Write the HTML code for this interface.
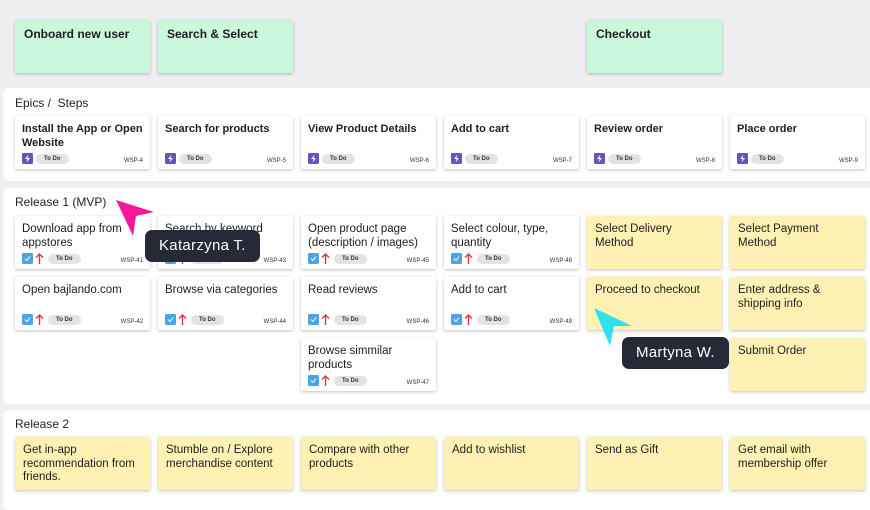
<!DOCTYPE html>
<html><head><meta charset="utf-8"><style>
*{box-sizing:border-box;margin:0;padding:0}
body{width:870px;height:494px;overflow:hidden;background:#efeff1;font-family:"Liberation Sans",sans-serif;position:relative;color:#1e1e1e}
.p{position:absolute;left:3px;width:880px;background:#fff;border-radius:6px}
.lbl{position:absolute;left:15px;font-size:12px;color:#222}
.c{position:absolute;width:135px;height:53px;background:#fff;border-radius:2px;box-shadow:0 1px 3px rgba(0,0,0,.25);padding:7px 7px;font-size:11.5px;line-height:13.5px}
.g{background:#c9f8dd;font-weight:bold;padding:8px 9px;font-size:12px}
.y{background:#fdf1b3;padding:7px 14px 7px 8px}
.e{font-weight:bold;font-size:11px}
.f{position:absolute;left:7px;right:7px;bottom:5px;height:11px;font-size:6px;font-weight:bold}
.ic{position:absolute;left:0;top:0;width:11px;height:11px;border-radius:1.5px;background:#6554c0}
.ic.b{background:#4ba3e8}
.ar{position:absolute;left:13px;top:0}
.td{position:absolute;top:1px;height:10px;line-height:10px;padding:0 8px;background:#e3e3e5;border-radius:5px;color:#333}
.ws{position:absolute;right:0;top:2px;color:#333;font-weight:normal}
.tag{position:absolute;background:#252a36;color:#fff;border-radius:7px;font-size:15px;padding:0 14px;line-height:32px;letter-spacing:.3px}
</style></head><body>
<div class="c g" style="left:15px;top:20px">Onboard new user</div>
<div class="c g" style="left:158px;top:20px">Search &amp; Select</div>
<div class="c g" style="left:587px;top:20px">Checkout</div>

<div class="p" style="top:88px;height:93px"></div>
<div class="p" style="top:188px;height:216px"></div>
<div class="p" style="top:410px;height:100px"></div>

<div class="lbl" style="top:96px">Epics /&nbsp; Steps</div>
<div class="lbl" style="top:195px">Release 1 (MVP)</div>
<div class="lbl" style="top:417px">Release 2</div>

<div class="c e" style="left:15px;top:116px">Install the App or Open Website<div class="f"><span class="ic"><svg width="11" height="11"><path d="M6.5 1.5L3 6h2.5L4.5 9.5 8 5H5.5z" fill="#fff"/></svg></span><span class="td" style="left:14px">To Do</span><span class="ws">WSP-4</span></div></div>
<div class="c e" style="left:158px;top:116px">Search for products<div class="f"><span class="ic"><svg width="11" height="11"><path d="M6.5 1.5L3 6h2.5L4.5 9.5 8 5H5.5z" fill="#fff"/></svg></span><span class="td" style="left:14px">To Do</span><span class="ws">WSP-5</span></div></div>
<div class="c e" style="left:301px;top:116px">View Product Details<div class="f"><span class="ic"><svg width="11" height="11"><path d="M6.5 1.5L3 6h2.5L4.5 9.5 8 5H5.5z" fill="#fff"/></svg></span><span class="td" style="left:14px">To Do</span><span class="ws">WSP-6</span></div></div>
<div class="c e" style="left:444px;top:116px">Add to cart<div class="f"><span class="ic"><svg width="11" height="11"><path d="M6.5 1.5L3 6h2.5L4.5 9.5 8 5H5.5z" fill="#fff"/></svg></span><span class="td" style="left:14px">To Do</span><span class="ws">WSP-7</span></div></div>
<div class="c e" style="left:587px;top:116px">Review order<div class="f"><span class="ic"><svg width="11" height="11"><path d="M6.5 1.5L3 6h2.5L4.5 9.5 8 5H5.5z" fill="#fff"/></svg></span><span class="td" style="left:14px">To Do</span><span class="ws">WSP-8</span></div></div>
<div class="c e" style="left:730px;top:116px">Place order<div class="f"><span class="ic"><svg width="11" height="11"><path d="M6.5 1.5L3 6h2.5L4.5 9.5 8 5H5.5z" fill="#fff"/></svg></span><span class="td" style="left:14px">To Do</span><span class="ws">WSP-9</span></div></div>

<div class="c" style="left:15px;top:216px">Download app from appstores<div class="f"><span class="ic b"><svg width="11" height="11"><path d="M3 5.5l2 2 3-4" stroke="#fff" fill="none"/></svg></span><svg class="ar" width="9" height="11"><path d="M4.5 11V1M1 4.5l3.5-3.5 3.5 3.5" stroke="#e5343a" stroke-width="1.4" fill="none"/></svg><span class="td" style="left:26px">To Do</span><span class="ws">WSP-41</span></div></div>
<div class="c" style="left:158px;top:216px">Search by keyword<div class="f"><span class="ic b"></span><svg class="ar" width="9" height="11"><path d="M4.5 11V1M1 4.5l3.5-3.5 3.5 3.5" stroke="#e5343a" stroke-width="1.4" fill="none"/></svg><span class="td" style="left:26px">To Do</span><span class="ws">WSP-43</span></div></div>
<div class="c" style="left:301px;top:216px">Open product page (description / images)<div class="f"><span class="ic b"><svg width="11" height="11"><path d="M3 5.5l2 2 3-4" stroke="#fff" fill="none"/></svg></span><svg class="ar" width="9" height="11"><path d="M4.5 11V1M1 4.5l3.5-3.5 3.5 3.5" stroke="#e5343a" stroke-width="1.4" fill="none"/></svg><span class="td" style="left:26px">To Do</span><span class="ws">WSP-45</span></div></div>
<div class="c" style="left:444px;top:216px">Select colour, type, quantity<div class="f"><span class="ic b"><svg width="11" height="11"><path d="M3 5.5l2 2 3-4" stroke="#fff" fill="none"/></svg></span><svg class="ar" width="9" height="11"><path d="M4.5 11V1M1 4.5l3.5-3.5 3.5 3.5" stroke="#e5343a" stroke-width="1.4" fill="none"/></svg><span class="td" style="left:26px">To Do</span><span class="ws">WSP-48</span></div></div>
<div class="c y" style="left:587px;top:216px">Select Delivery Method</div>
<div class="c y" style="left:730px;top:216px">Select Payment Method</div>

<div class="c" style="left:15px;top:277px">Open bajlando.com<div class="f"><span class="ic b"><svg width="11" height="11"><path d="M3 5.5l2 2 3-4" stroke="#fff" fill="none"/></svg></span><svg class="ar" width="9" height="11"><path d="M4.5 11V1M1 4.5l3.5-3.5 3.5 3.5" stroke="#e5343a" stroke-width="1.4" fill="none"/></svg><span class="td" style="left:26px">To Do</span><span class="ws">WSP-42</span></div></div>
<div class="c" style="left:158px;top:277px">Browse via categories<div class="f"><span class="ic b"><svg width="11" height="11"><path d="M3 5.5l2 2 3-4" stroke="#fff" fill="none"/></svg></span><svg class="ar" width="9" height="11"><path d="M4.5 11V1M1 4.5l3.5-3.5 3.5 3.5" stroke="#e5343a" stroke-width="1.4" fill="none"/></svg><span class="td" style="left:26px">To Do</span><span class="ws">WSP-44</span></div></div>
<div class="c" style="left:301px;top:277px">Read reviews<div class="f"><span class="ic b"><svg width="11" height="11"><path d="M3 5.5l2 2 3-4" stroke="#fff" fill="none"/></svg></span><svg class="ar" width="9" height="11"><path d="M4.5 11V1M1 4.5l3.5-3.5 3.5 3.5" stroke="#e5343a" stroke-width="1.4" fill="none"/></svg><span class="td" style="left:26px">To Do</span><span class="ws">WSP-46</span></div></div>
<div class="c" style="left:444px;top:277px">Add to cart<div class="f"><span class="ic b"><svg width="11" height="11"><path d="M3 5.5l2 2 3-4" stroke="#fff" fill="none"/></svg></span><svg class="ar" width="9" height="11"><path d="M4.5 11V1M1 4.5l3.5-3.5 3.5 3.5" stroke="#e5343a" stroke-width="1.4" fill="none"/></svg><span class="td" style="left:26px">To Do</span><span class="ws">WSP-49</span></div></div>
<div class="c y" style="left:587px;top:277px">Proceed to checkout</div>
<div class="c y" style="left:730px;top:277px">Enter address &amp; shipping info</div>

<div class="c" style="left:301px;top:338px">Browse simmilar products<div class="f"><span class="ic b"><svg width="11" height="11"><path d="M3 5.5l2 2 3-4" stroke="#fff" fill="none"/></svg></span><svg class="ar" width="9" height="11"><path d="M4.5 11V1M1 4.5l3.5-3.5 3.5 3.5" stroke="#e5343a" stroke-width="1.4" fill="none"/></svg><span class="td" style="left:26px">To Do</span><span class="ws">WSP-47</span></div></div>
<div class="c y" style="left:730px;top:338px">Submit Order</div>

<div class="c y" style="left:15px;top:437px">Get in-app recommendation from friends.</div>
<div class="c y" style="left:158px;top:437px">Stumble on / Explore merchandise content</div>
<div class="c y" style="left:301px;top:437px">Compare with other products</div>
<div class="c y" style="left:444px;top:437px">Add to wishlist</div>
<div class="c y" style="left:587px;top:437px">Send as Gift</div>
<div class="c y" style="left:730px;top:437px">Get email with membership offer</div>

<svg style="position:absolute;left:114px;top:198px" width="42" height="42"><path d="M2 2L40 14 22 18 19 38z" fill="#f7189a"/></svg>
<div class="tag" style="left:145px;top:230px">Katarzyna T.</div>
<svg style="position:absolute;left:592px;top:306px" width="42" height="42"><path d="M2 2L40 20 22 20 18 40z" fill="#2fe0ef"/></svg>
<div class="tag" style="left:622px;top:337px">Martyna W.</div>
</body></html>
